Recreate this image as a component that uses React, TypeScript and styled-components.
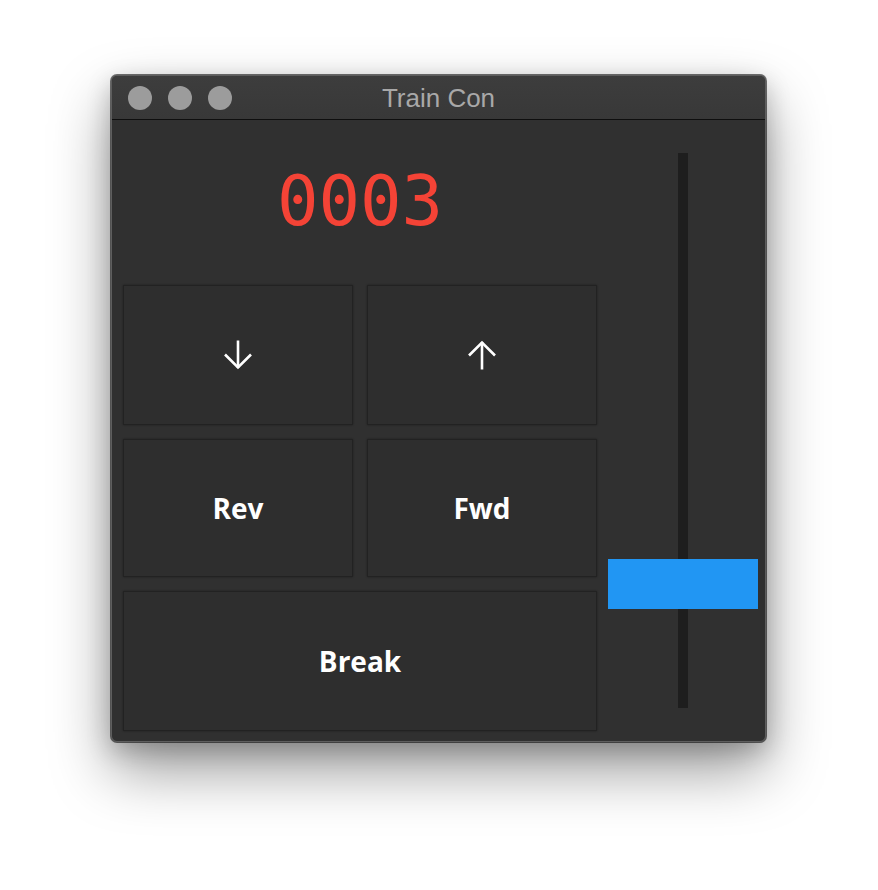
import React from "react";
import styled, { createGlobalStyle } from "styled-components";

const Global = createGlobalStyle`
  html, body { margin: 0; padding: 0; background: #ffffff; }
  body { width: 878px; height: 890px; overflow: hidden; }
`;

const Page = styled.div`
  box-sizing: border-box;
  width: 878px;
  height: 890px;
  padding: 75px 0 0 111px;
`;

const Window = styled.div`
  box-sizing: border-box;
  width: 655px;
  height: 667px;
  border-radius: 6px;
  border: 1px solid #5e5e5e;
  background: #303030;
  overflow: hidden;
  display: flex;
  flex-direction: column;
  box-shadow: 0 0 0 1px rgba(0, 0, 0, 0.55), 0 28px 60px rgba(0, 0, 0, 0.4),
    0 8px 24px rgba(0, 0, 0, 0.22);
`;

const TitleBar = styled.div`
  position: relative;
  height: 43px;
  flex: none;
  background: linear-gradient(#3d3d3d, #383838);
  border-bottom: 1px solid #0e0e0e;
  display: flex;
  align-items: center;
  justify-content: center;
`;

const Lights = styled.div`
  position: absolute;
  left: 16px;
  top: 10px;
  display: flex;
  gap: 16px;
`;

const Light = styled.span`
  width: 24px;
  height: 24px;
  border-radius: 50%;
  background: #9c9c9c;
`;

const Title = styled.span`
  font-family: "Liberation Sans", Arial, sans-serif;
  font-size: 26px;
  color: #a8a8a8;
  margin-top: 1px;
`;

const Content = styled.div`
  flex: 1;
  display: grid;
  grid-template-columns: 474px 150px;
  column-gap: 11px;
  padding: 0 7px 0 11px;
`;

const LeftCol = styled.div`
  display: flex;
  flex-direction: column;
  padding-bottom: 10px;
`;

const Counter = styled.div`
  height: 165px;
  display: flex;
  align-items: center;
  justify-content: center;
  font-family: "DejaVu Sans Mono", monospace;
  font-size: 69px;
  color: #f44336;
  padding-bottom: 3px;
  box-sizing: border-box;
`;

const ButtonGrid = styled.div`
  display: grid;
  grid-template-columns: 1fr 1fr;
  grid-template-rows: 140px 138px 140px;
  gap: 14px;
`;

const Btn = styled.button<{ $wide?: boolean }>`
  grid-column: ${(p) => (p.$wide ? "1 / span 2" : "auto")};
  box-sizing: border-box;
  margin: 0;
  padding: 0;
  background: #2e2e2e;
  border: 1px solid #222222;
  box-shadow: 0 0 2px rgba(0, 0, 0, 0.35);
  color: #ffffff;
  font-family: "Open Sans", sans-serif;
  font-weight: 700;
  font-size: 28px;
  display: flex;
  align-items: center;
  justify-content: center;
  cursor: pointer;
`;

const SliderCol = styled.div`
  position: relative;
  display: flex;
  justify-content: center;
  padding: 33px 0 33px;
`;

const Track = styled.div`
  width: 10px;
  background: #1e1e1e;
`;

const Handle = styled.div`
  position: absolute;
  left: 0;
  right: 0;
  height: 50px;
  background: #2196f3;
`;

const Arrow = ({ up }: { up?: boolean }) => (
  <svg width="30" height="30" viewBox="0 0 30 30" fill="none">
    <g
      stroke="#ffffff"
      strokeWidth="2.6"
      strokeLinecap="butt"
      strokeLinejoin="miter"
      transform={up ? undefined : "rotate(180 15 15)"}
    >
      <path d="M15 2V29.5" />
      <path d="M2 15.5L15 2.5L28 15.5" />
    </g>
  </svg>
);

export default function App() {
  const value = 3;
  const handleTop = 439; // px from column top
  return (
    <Page>
      <Global />
      <Window>
        <TitleBar>
          <Lights>
            <Light />
            <Light />
            <Light />
          </Lights>
          <Title>Train Con</Title>
        </TitleBar>
        <Content>
          <LeftCol>
            <Counter>{String(value).padStart(4, "0")}</Counter>
            <ButtonGrid>
              <Btn>
                <Arrow />
              </Btn>
              <Btn>
                <Arrow up />
              </Btn>
              <Btn>Rev</Btn>
              <Btn>Fwd</Btn>
              <Btn $wide>Break</Btn>
            </ButtonGrid>
          </LeftCol>
          <SliderCol>
            <Track />
            <Handle style={{ top: handleTop }} />
          </SliderCol>
        </Content>
      </Window>
    </Page>
  );
}
